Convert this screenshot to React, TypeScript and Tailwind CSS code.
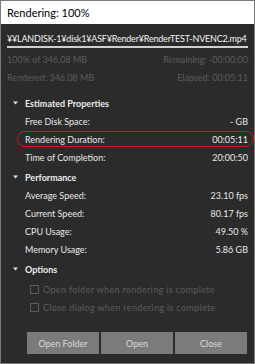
import React from "react"

const sections = [
  {
    title: "Estimated Properties",
    gap: "mt-[8px]",
    rows: [
      { label: "Free Disk Space:", value: "- GB" },
      { label: "Rendering Duration:", value: "00:05:11", marked: true },
      { label: "Time of Completion:", value: "20:00:50" },
    ],
  },
  {
    title: "Performance",
    gap: "mt-[2px]",
    rows: [
      { label: "Average Speed:", value: "23.10 fps" },
      { label: "Current Speed:", value: "80.17 fps" },
      { label: "CPU Usage:", value: "49.50 %" },
      { label: "Memory Usage:", value: "5.86 GB" },
    ],
  },
]

const options = ["Open folder when rendering is complete", "Close dialog when rendering is complete"]

const Header = ({ title, className }: { title: string; className: string }) => (
  <div className={`flex h-[18px] items-center pl-[3px] font-bold text-[#ececec] ${className}`}>
    <svg width="5" height="4" viewBox="0 0 5 4" className="mr-[7px]">
      <path d="M0 0.5 H5 L2.5 3.5 Z" fill="#e6e6e6" />
    </svg>
    {title}
  </div>
)

const App: React.FC = () => {
  return (
    <div
      className="flex h-[364px] w-[255px] flex-col overflow-hidden border border-[#7a7a7a] bg-[#2b2b2b] text-[9px] leading-none"
      style={{ fontFamily: "Lato, sans-serif" }}
    >
      <div className="flex h-[23px] shrink-0 items-center bg-white px-[6px] text-[11px] text-black">
        Rendering: 100%
      </div>

      <div className="px-[6px] pt-[7px]">
        <div className="flex h-[14px] items-center whitespace-nowrap tracking-[-0.2px] text-[#f2f2f2]">
          ¥¥LANDISK-1¥disk1¥ASF¥Render¥RenderTEST-NVENC2.mp4
        </div>
        <div className="mt-[1px] h-[2px] bg-[#cfcfcf]" />
        <div className="mt-[2px] flex h-[18px] items-center justify-between text-[#5c5c5c]">
          <span>100% of 346.08 MB</span>
          <span>Remaining: -00:00:00</span>
        </div>
        <div className="flex h-[18px] items-center justify-between text-[#5c5c5c]">
          <span>Rendered: 346.08 MB</span>
          <span>Elapsed: 00:05:11</span>
        </div>
      </div>

      <div className="pl-[9px] pr-[6px]">
        {sections.map((s) => (
          <div key={s.title}>
            <Header title={s.title} className={s.gap} />
            {s.rows.map((r) => (
              <div key={r.label} className="relative flex h-[18px] items-center justify-between pl-[15px] text-[#e8e8e8]">
                <span>{r.label}</span>
                <span>{r.value}</span>
                {r.marked && (
                  <div className="absolute -right-[6px] left-[7px] top-[1px] bottom-[1px] rounded-full border-[1.5px] border-[#e0101a]" />
                )}
              </div>
            ))}
          </div>
        ))}

        <Header title="Options" className="mt-[2px]" />
        <div className="mt-[2px]">
          {options.map((o) => (
            <div key={o} className="flex h-[18px] items-center pl-[20px] tracking-[0.35px] text-[#5c5c5c]">
              <span className="mr-[4px] h-[9px] w-[9px] border border-[#5c5c5c]" />
              {o}
            </div>
          ))}
        </div>
      </div>

      <div className="mt-[16px] flex gap-[2px] pl-[26px]">
        {["Open Folder", "Open", "Close"].map((b) => (
          <div key={b} className="flex h-[22px] w-[72px] items-center justify-center bg-[#7b7b7b] text-[#d9d9d9]">
            {b}
          </div>
        ))}
      </div>
    </div>
  )
}

export default App
